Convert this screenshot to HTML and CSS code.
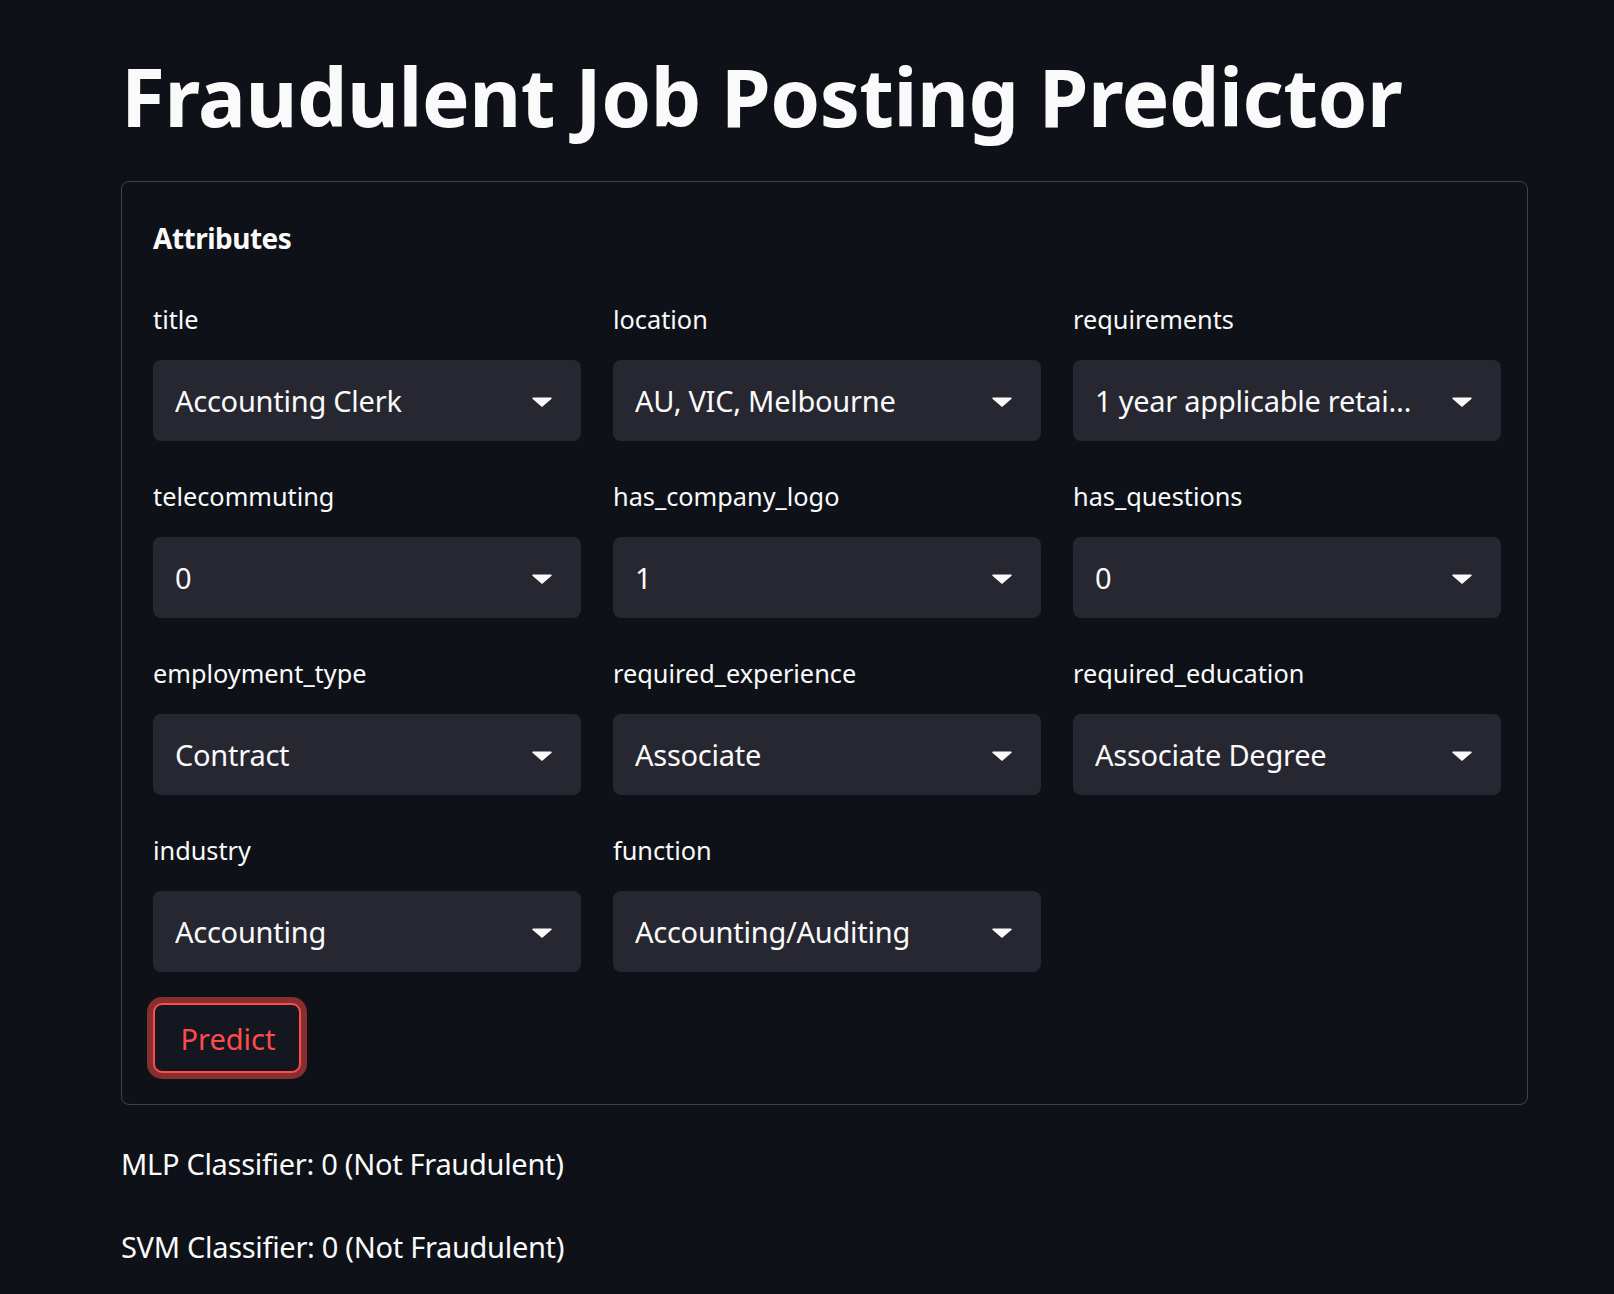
FILE: index.html
```html
<!DOCTYPE html>
<html lang="en">
<head>
<meta charset="utf-8">
<title>Fraudulent Job Posting Predictor</title>
<link rel="stylesheet" href="styles.css">
</head>
<body>
<main class="page">
  <h1 class="title">Fraudulent Job Posting Predictor</h1>
  <form class="form">
    <h3 class="form-heading">Attributes</h3>
    <div class="fields">
      <div class="field">
        <label class="label">title</label>
        <div class="select"><span class="value">Accounting Clerk</span><svg class="caret" viewBox="0 0 20 10"><path d="M1 0.5h18a0.8 0.8 0 0 1 0.6 1.3L10.6 9.6a0.8 0.8 0 0 1-1.2 0L0.4 1.8A0.8 0.8 0 0 1 1 0.5z"/></svg></div>
      </div>
      <div class="field">
        <label class="label">location</label>
        <div class="select"><span class="value">AU, VIC, Melbourne</span><svg class="caret" viewBox="0 0 20 10"><path d="M1 0.5h18a0.8 0.8 0 0 1 0.6 1.3L10.6 9.6a0.8 0.8 0 0 1-1.2 0L0.4 1.8A0.8 0.8 0 0 1 1 0.5z"/></svg></div>
      </div>
      <div class="field">
        <label class="label">requirements</label>
        <div class="select"><span class="value">1 year applicable retai…</span><svg class="caret" viewBox="0 0 20 10"><path d="M1 0.5h18a0.8 0.8 0 0 1 0.6 1.3L10.6 9.6a0.8 0.8 0 0 1-1.2 0L0.4 1.8A0.8 0.8 0 0 1 1 0.5z"/></svg></div>
      </div>
      <div class="field">
        <label class="label">telecommuting</label>
        <div class="select"><span class="value">0</span><svg class="caret" viewBox="0 0 20 10"><path d="M1 0.5h18a0.8 0.8 0 0 1 0.6 1.3L10.6 9.6a0.8 0.8 0 0 1-1.2 0L0.4 1.8A0.8 0.8 0 0 1 1 0.5z"/></svg></div>
      </div>
      <div class="field">
        <label class="label">has_company_logo</label>
        <div class="select"><span class="value">1</span><svg class="caret" viewBox="0 0 20 10"><path d="M1 0.5h18a0.8 0.8 0 0 1 0.6 1.3L10.6 9.6a0.8 0.8 0 0 1-1.2 0L0.4 1.8A0.8 0.8 0 0 1 1 0.5z"/></svg></div>
      </div>
      <div class="field">
        <label class="label">has_questions</label>
        <div class="select"><span class="value">0</span><svg class="caret" viewBox="0 0 20 10"><path d="M1 0.5h18a0.8 0.8 0 0 1 0.6 1.3L10.6 9.6a0.8 0.8 0 0 1-1.2 0L0.4 1.8A0.8 0.8 0 0 1 1 0.5z"/></svg></div>
      </div>
      <div class="field">
        <label class="label">employment_type</label>
        <div class="select"><span class="value">Contract</span><svg class="caret" viewBox="0 0 20 10"><path d="M1 0.5h18a0.8 0.8 0 0 1 0.6 1.3L10.6 9.6a0.8 0.8 0 0 1-1.2 0L0.4 1.8A0.8 0.8 0 0 1 1 0.5z"/></svg></div>
      </div>
      <div class="field">
        <label class="label">required_experience</label>
        <div class="select"><span class="value">Associate</span><svg class="caret" viewBox="0 0 20 10"><path d="M1 0.5h18a0.8 0.8 0 0 1 0.6 1.3L10.6 9.6a0.8 0.8 0 0 1-1.2 0L0.4 1.8A0.8 0.8 0 0 1 1 0.5z"/></svg></div>
      </div>
      <div class="field">
        <label class="label">required_education</label>
        <div class="select"><span class="value">Associate Degree</span><svg class="caret" viewBox="0 0 20 10"><path d="M1 0.5h18a0.8 0.8 0 0 1 0.6 1.3L10.6 9.6a0.8 0.8 0 0 1-1.2 0L0.4 1.8A0.8 0.8 0 0 1 1 0.5z"/></svg></div>
      </div>
      <div class="field">
        <label class="label">industry</label>
        <div class="select"><span class="value">Accounting</span><svg class="caret" viewBox="0 0 20 10"><path d="M1 0.5h18a0.8 0.8 0 0 1 0.6 1.3L10.6 9.6a0.8 0.8 0 0 1-1.2 0L0.4 1.8A0.8 0.8 0 0 1 1 0.5z"/></svg></div>
      </div>
      <div class="field">
        <label class="label">function</label>
        <div class="select"><span class="value">Accounting/Auditing</span><svg class="caret" viewBox="0 0 20 10"><path d="M1 0.5h18a0.8 0.8 0 0 1 0.6 1.3L10.6 9.6a0.8 0.8 0 0 1-1.2 0L0.4 1.8A0.8 0.8 0 0 1 1 0.5z"/></svg></div>
      </div>
    </div>
    <button type="button" class="predict">Predict</button>
  </form>
  <p class="result">MLP Classifier: 0 (Not Fraudulent)</p>
  <p class="result">SVM Classifier: 0 (Not Fraudulent)</p>
</main>
</body>
</html>
```
FILE: styles.css
```css
html, body {
  margin: 0;
  padding: 0;
  background: #0e1117;
}
body {
  color: #fafafa;
  font-family: "Source Sans Pro", "Noto Sans", sans-serif;
}
.page {
  width: 1407px;
  margin-left: 121px;
  padding-top: 36px;
}
.title {
  margin: 0;
  font-size: 80px;
  line-height: 120px;
  font-weight: 700;
  letter-spacing: -0.5px;
  height: 122px;
}
.form {
  margin-top: 23px;
  border: 1px solid rgba(250, 250, 250, 0.21);
  border-radius: 8px;
  padding: 34px 26px 31px 31px;
}
.form-heading {
  margin: 0;
  font-size: 28px;
  font-weight: 700;
  letter-spacing: -0.5px;
  line-height: 44px;
  height: 44px;
}
.fields {
  margin-top: 38px;
  display: grid;
  grid-template-columns: repeat(3, 428px);
  column-gap: 32px;
  row-gap: 34px;
}
.field {
  display: flex;
  flex-direction: column;
}
.label {
  font-size: 25.3px;
  line-height: 42px;
  height: 44px;
  margin-bottom: 18px;
}
.select {
  height: 81px;
  background: #262730;
  border-radius: 8px;
  display: flex;
  align-items: center;
  padding: 0 29px 0 22px;
}
.value {
  flex: 1;
  font-size: 29px;
  letter-spacing: -0.25px;
  white-space: nowrap;
  overflow: hidden;
  text-overflow: ellipsis;
}
.caret {
  width: 20px;
  height: 10px;
  fill: #fafafa;
  margin-left: 12px;
  margin-top: 2px;
}
.predict {
  margin-top: 31px;
  width: 148px;
  height: 70px;
  background: #141720;
  border: 2px solid #ff4b4b;
  border-radius: 9px;
  box-shadow: 0 0 0 6px rgba(255, 75, 75, 0.5);
  color: #ff4b4b;
  font-family: inherit;
  font-size: 29px;
  padding: 0 0 0 2px;
  display: block;
}
.result {
  margin: 33px 0 0 0;
  font-size: 29px;
  letter-spacing: -0.3px;
  line-height: 51px;
}
.result + .result {
  margin-top: 32px;
}
```
